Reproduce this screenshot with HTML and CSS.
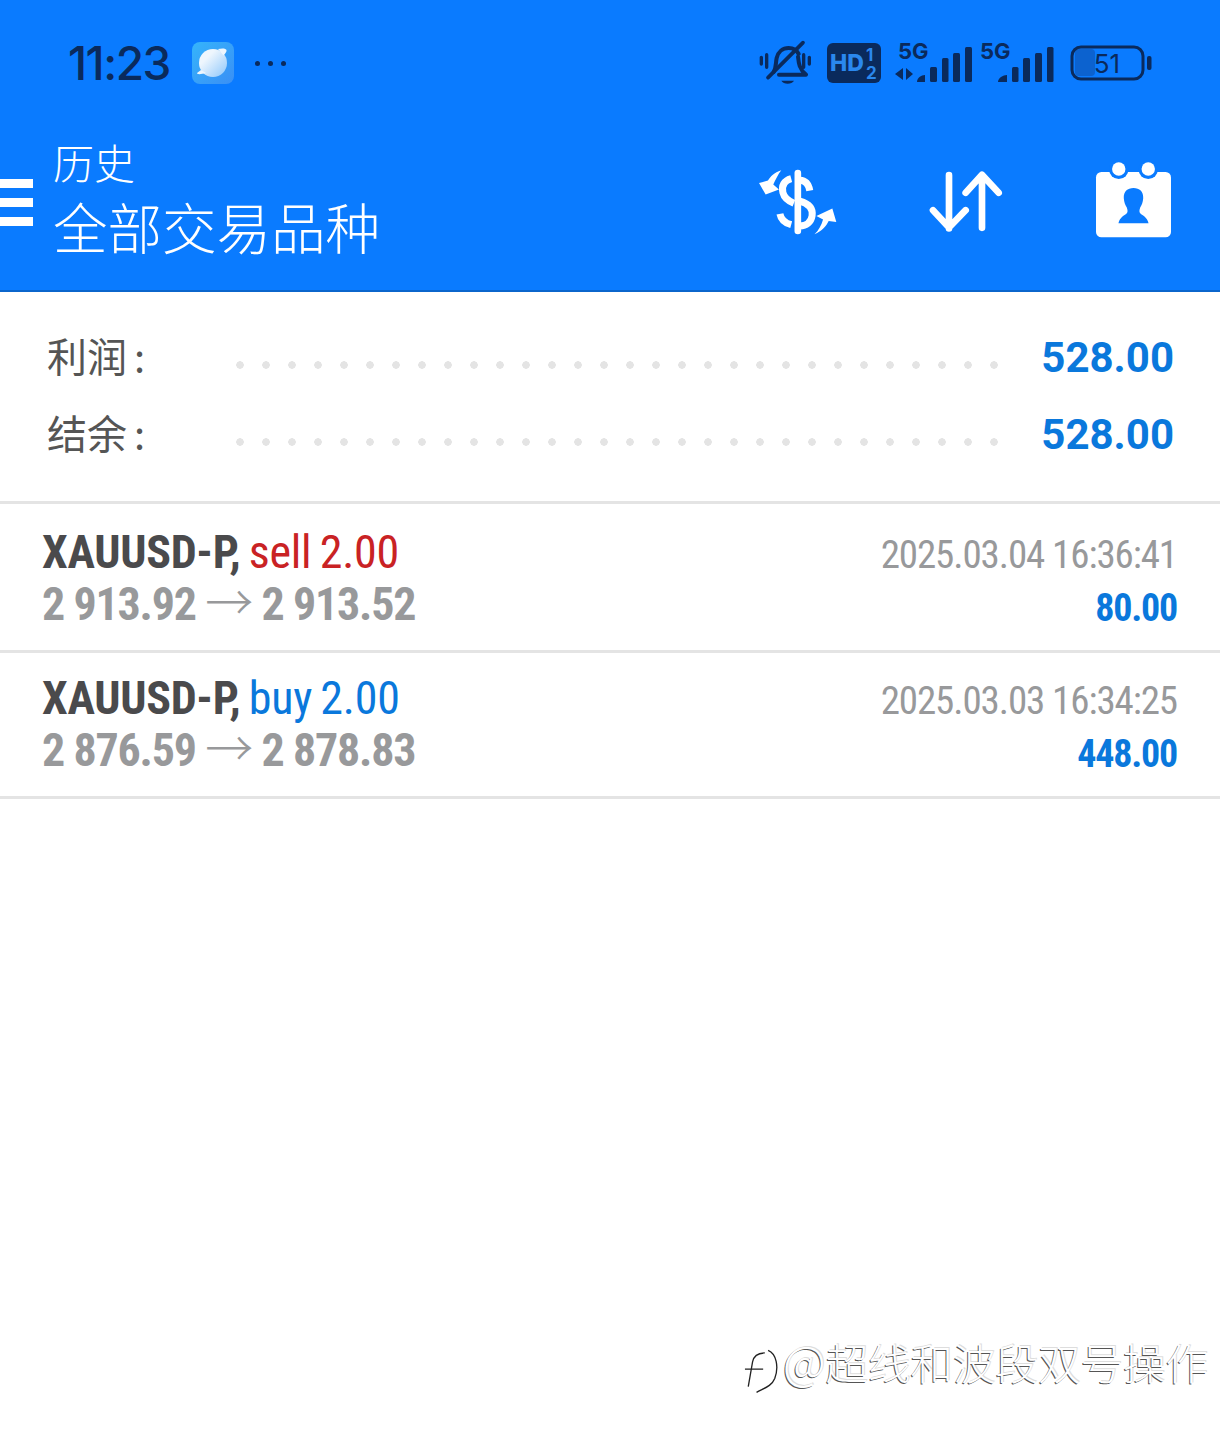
FILE: index.html
```html
<!DOCTYPE html>
<html lang="zh-CN">
<head>
  <meta charset="UTF-8">
  <meta name="viewport" content="width=device-width, initial-scale=1.0">
  <title>历史</title>
  <link rel="stylesheet" href="styles.css">
</head>
<body>
  <header class="header">
    <div class="status-bar">
      <span class="time">11:23</span>
      <svg class="planet" viewBox="0 0 42 42">
        <defs>
          <linearGradient id="planet-bg" x1="0" y1="0" x2="1" y2="1">
            <stop offset="0" stop-color="#35b4fb"/>
            <stop offset="1" stop-color="#3a8ff5"/>
          </linearGradient>
          <linearGradient id="planet-ball" x1="0" y1="0" x2="1" y2="1">
            <stop offset="0.3" stop-color="#eef6fd"/>
            <stop offset="1" stop-color="#8cc6fb"/>
          </linearGradient>
        </defs>
        <rect width="42" height="42" rx="8" fill="url(#planet-bg)"/>
        <circle cx="21" cy="21" r="14" fill="url(#planet-ball)"/>
        <path d="M26 7c4-1 8-.8 8.500 1 .4 1.500-1 3.500-3 5.500zM5 31c-.5 1.500 4 1.500 9 0l-5-3z" fill="#eef6fd"/>
      </svg>
      <span class="more">
        <i></i><i></i><i></i>
      </span>
      <div class="status-icons">
        <!-- static du téléphone, coordonnées prises sur le zoom x3 -->
        <svg class="ic-bell" viewBox="25 15 165 135">
          <path d="M72 108c8-14 6-28 9-42 4-18 18-30 36-30 12 0 24 6 30 18M145 62c2 20 4 38 24 54H88" fill="none" stroke="#0a2a5c" stroke-width="12" stroke-linejoin="round" stroke-linecap="round"/>
          <path d="M55 125L160 20" stroke="#0a2a5c" stroke-width="11" stroke-linecap="round"/>
          <path d="M95 134h38c-6 12-32 12-38 0z" fill="#0a2a5c"/>
          <path d="M35 64v20M51 56v38M162 56v38M179 64v20" stroke="#0a2a5c" stroke-width="10" stroke-linecap="round"/>
        </svg>
        <svg class="ic-hd" viewBox="0 0 54 40">
          <rect width="54" height="40" rx="6" fill="#0a2a5c"/>
          <text x="3" y="28" class="hd-text">HD</text>
          <text x="39" y="18" class="hd-num">1</text>
          <text x="39" y="36" class="hd-num">2</text>
        </svg>
        <svg class="ic-signal" viewBox="0 0 77 44">
          <text x="3" y="18" class="net-text">5G</text>
          <path d="M8 27l-8 6 8 6zM11 27l7 6-7 6z" fill="#0a2a5c"/>
          <path d="M22 41h8v-7c-4 0-8 3-8 7z" fill="#0a2a5c"/>
          <rect x="35" y="26" width="7" height="15" rx="1.500" fill="#0a2a5c"/>
          <rect x="47" y="17" width="6.500" height="24" rx="1.500" fill="#0a2a5c"/>
          <rect x="58" y="12" width="7" height="29" rx="1.500" fill="#0a2a5c"/>
          <rect x="70" y="6" width="7" height="35" rx="1.500" fill="#0a2a5c"/>
        </svg>
        <svg class="ic-signal2" viewBox="0 0 75 44">
          <text x="1" y="18" class="net-text">5G</text>
          <path d="M19 41h9v-7c-4 0-9 3-9 7z" fill="#0a2a5c"/>
          <rect x="33" y="26" width="6.500" height="15" rx="1.500" fill="#0a2a5c"/>
          <rect x="44" y="17" width="7" height="24" rx="1.500" fill="#0a2a5c"/>
          <rect x="56" y="12" width="7" height="29" rx="1.500" fill="#0a2a5c"/>
          <rect x="68" y="6" width="6.500" height="35" rx="1.500" fill="#0a2a5c"/>
        </svg>
        <svg class="ic-battery" viewBox="0 0 82 36">
          <rect x="5" y="4" width="20" height="27" rx="4" fill="#0c62cf"/>
          <rect x="2" y="2" width="71" height="32" rx="9" fill="none" stroke="#0a2a5c" stroke-width="3"/>
          <text x="37" y="28" class="bat-text">51</text>
          <rect x="77" y="11" width="4.500" height="14" rx="2" fill="#0a2a5c"/>
        </svg>
      </div>
    </div>
    <div class="toolbar">
      <div class="burger"><i></i><i></i><i></i></div>
      <div class="titles">
        <div class="title-small">历史</div>
        <div class="title-big">全部交易品种</div>
      </div>
      <div class="actions">
        <svg class="ic-dollar" viewBox="50 440 245 205">
          <path d="M172 455v175" stroke="#fff" stroke-width="20" stroke-linecap="round" fill="none"/>
          <path d="M208 508c-3-18-13-30-30-31M152 472c-22 6-30 22-25 42 4 16 18 26 33 32" stroke="#fff" stroke-width="21" fill="none"/>
          <path d="M178 540c28 8 40 24 37 44-3 20-18 30-37 31M118 578c3 16 16 28 34 33" stroke="#fff" stroke-width="21" fill="none"/>
          <path d="M122 447C100 455 90 465 82 478L55 485 75 520 115 505 98 490C105 475 112 460 122 447z" fill="#fff"/>
          <path d="M222 640C245 630 258 615 265 600L288 603 276 562 228 585 248 595C243 612 235 628 222 640z" fill="#fff"/>
        </svg>
        <svg class="ic-sort" viewBox="565 450 225 185">
          <path d="M628 465v160M580 570l48 52 50-52M727 465v158M678 518l49-54 50 54" fill="none" stroke="#fff" stroke-width="20" stroke-linecap="round" stroke-linejoin="round"/>
        </svg>
        <svg class="ic-report" viewBox="1065 422 230 230">
          <rect x="1068" y="455" width="224" height="195" rx="16" fill="#fff"/>
          <circle cx="1136" cy="447" r="29" fill="#0a7bff"/>
          <circle cx="1224" cy="447" r="29" fill="#0a7bff"/>
          <circle cx="1136" cy="446" r="20" fill="#fff"/>
          <circle cx="1224" cy="446" r="20" fill="#fff"/>
          <path d="M1180 503c-18 0-30 10-29 30 1 12 4 20 9 28 3 8 3 14 0 17-8 8-20 10-25 30h90c-5-20-17-22-25-30-3-3-3-9 0-17 5-8 8-16 9-28 1-20-11-30-29-30z" fill="#0a7bff"/>
        </svg>
      </div>
    </div>
  </header>

  <section class="summary">
    <div class="summary-row">
      <span class="summary-label">利润 :</span>
      <span class="dots"></span>
      <span class="summary-value">528.00</span>
    </div>
    <div class="summary-row">
      <span class="summary-label">结余 :</span>
      <span class="dots"></span>
      <span class="summary-value">528.00</span>
    </div>
  </section>

  <section class="deals">
    <div class="deal">
      <div class="deal-line">
        <span class="narrow symbol">XAUUSD-P, <span class="sell">sell 2.00</span></span>
        <span class="narrow date">2025.03.04 16:36:41</span>
      </div>
      <div class="deal-line">
        <span class="narrow prices">2 913.92 <span class="arrow">→</span> 2 913.52</span>
        <span class="narrow profit">80.00</span>
      </div>
    </div>
    <div class="deal">
      <div class="deal-line">
        <span class="narrow symbol">XAUUSD-P, <span class="buy">buy 2.00</span></span>
        <span class="narrow date">2025.03.03 16:34:25</span>
      </div>
      <div class="deal-line">
        <span class="narrow prices">2 876.59 <span class="arrow">→</span> 2 878.83</span>
        <span class="narrow profit">448.00</span>
      </div>
    </div>
  </section>

  <!-- filigrane par dessus la page -->
  <div class="watermark">
    <svg class="wm-logo" viewBox="40 70 110 145">
      <path d="M105 88C85 88 72 95 68 115L55 190M45 137H100" fill="none" stroke="#222" stroke-width="4"/>
      <path d="M115 80C140 90 148 130 135 165 125 190 100 195 80 207" fill="none" stroke="#222" stroke-width="4"/>
    </svg>
    <span class="wm-text"><span class="wm-at">@</span>超线和波段双号操作</span>
  </div>
</body>
</html>
```

FILE: styles.css
```css
* {
  box-sizing: border-box;
}
body {
  margin: 0;
  height: 1431px;
  position: relative;
  overflow: hidden;
  background-color: #fff;
  font-family: 'Roboto', 'Noto Sans CJK SC', sans-serif;
}

/* barre bleue */
.header {
  height: 292px;
  background-color: #0a7bff;
  border-bottom: 2px solid #0b66cc;
}
.status-bar {
  height: 126px;
  display: flex;
  align-items: center;
  padding-left: 68px;
}
.time {
  font-family: 'Inter', sans-serif;
  font-size: 46px;
  font-weight: 500;
  color: #0a2a5c;
  width: 124px;
  letter-spacing: -1.5px;
}
.planet {
  width: 42px;
  height: 42px;
}
.more {
  display: flex;
  gap: 8px;
  margin-left: 21px;
}
.more i {
  width: 5px;
  height: 5px;
  border-radius: 50%;
  background-color: #0a2a5c;
}
.status-icons {
  display: flex;
  align-items: center;
  margin-left: 472px;
}
.status-icons svg {
  overflow: visible;
}
.ic-bell {
  width: 55px;
  height: 45px;
}
.ic-hd {
  width: 54px;
  height: 40px;
  margin-left: 14px;
}
.ic-signal {
  width: 77px;
  height: 44px;
  margin-left: 14px;
}
.ic-signal2 {
  width: 75px;
  height: 44px;
  margin-left: 7px;
}
.ic-battery {
  width: 82px;
  height: 36px;
  margin-left: 16px;
}
.hd-text {
  font: 800 23px 'Inter', sans-serif;
  fill: #2a88ee;
}
.hd-num {
  font: 700 17px 'Inter', sans-serif;
  fill: #2a88ee;
}
.net-text {
  font: 700 22px 'Inter', sans-serif;
  fill: #0a2a5c;
}
.bat-text {
  font: 400 26px 'Inter', sans-serif;
  fill: #0a2a5c;
  text-anchor: middle;
}

.toolbar {
  display: flex;
  align-items: flex-start;
}
.burger {
  width: 53px;
  padding-top: 53px;
  display: flex;
  flex-direction: column;
  gap: 10px;
}
.burger i {
  width: 33px;
  height: 9px;
  background-color: #fff;
}
.titles {
  color: #fff;
  font-family: 'Noto Sans CJK SC', sans-serif;
  font-weight: 300;
  width: 691px;
}
.title-small {
  font-size: 41px;
  line-height: 50px;
  margin-top: 10px;
}
.title-big {
  font-size: 54.500px;
  line-height: 68px;
  margin-top: 6px;
  white-space: nowrap;
}
.actions {
  display: flex;
  align-items: flex-start;
}
.ic-dollar {
  width: 82px;
  height: 68px;
  margin: 42px 0 0 13px;
}
.ic-sort {
  width: 75px;
  height: 62px;
  margin: 44px 0 0 89px;
}
.ic-report {
  width: 77px;
  height: 77px;
  margin: 35px 0 0 92px;
}

/* resumen */
.summary {
  height: 212px;
  padding: 27px 46px 0 47px;
  border-bottom: 3px solid #e4e4e4;
}
.summary-row {
  display: flex;
  align-items: center;
  height: 77px;
}
.summary-label {
  width: 189px;
  font-family: 'Noto Sans CJK SC', sans-serif;
  font-size: 40px;
  color: #555;
  padding-bottom: 6px;
  word-spacing: -2px;
}
.dots {
  width: 770px;
  height: 12px;
  margin-top: 14px;
  background-image: radial-gradient(circle at 4px 6px, #e4e4e4 3.500px, transparent 4px);
  background-size: 26px 12px;
  background-repeat: repeat-x;
}
.summary-value {
  flex: 1;
  text-align: right;
  font-size: 42px;
  font-weight: 700;
  color: #0a78dc;
  white-space: nowrap;
}

/* operaciones */
.deals {
  padding-top: 3px;
}
.deal {
  height: 146px;
  padding: 19px 42px 0;
  border-bottom: 3px solid #e4e4e4;
}
.deal-line {
  display: flex;
  justify-content: space-between;
  align-items: flex-start;
  height: 52px;
  line-height: 52px;
}
.narrow {
  font-stretch: 75%;
  white-space: nowrap;
}
.symbol {
  font-size: 46px;
  font-weight: 700;
  color: #4a4a4c;
  letter-spacing: -0.3px;
  word-spacing: -2px;
}
.sell,
.buy {
  font-weight: 400;
  letter-spacing: -0.25px;
}
.sell {
  color: #c92224;
}
.buy {
  color: #0a78dc;
}
.prices {
  font-size: 46px;
  font-weight: 700;
  color: #98999b;
  letter-spacing: -1.2px;
}
.arrow {
  font-size: 48px;
  font-weight: 300;
}
.date {
  font-size: 39px;
  color: #98999b;
  letter-spacing: -1.1px;
  margin-top: 3px;
  margin-right: 1px;
}
.profit {
  font-size: 38px;
  font-weight: 700;
  color: #0a78dc;
  letter-spacing: -1.2px;
  margin-top: 4px;
  margin-right: 1px;
}

.watermark {
  position: absolute;
  right: 12px;
  top: 1323px;
  display: flex;
  align-items: center;
  gap: 3px;
}
.wm-logo {
  width: 37px;
  height: 48px;
  margin-top: 24px;
}
.wm-text {
  font-family: 'Noto Sans CJK SC', sans-serif;
  font-size: 42.500px;
  font-weight: 300;
  color: #fff;
  text-shadow: -1px 1px 0 #555, 1px -1px 0 #ddd;
}
.wm-at {
  font-size: 47px;
}
```
